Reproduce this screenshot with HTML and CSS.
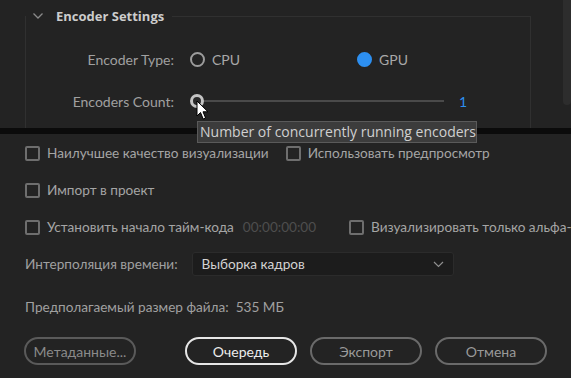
FILE: index.html
```html
<!DOCTYPE html>
<html lang="ru">
<head>
    <meta charset="UTF-8">
    <title>Export Settings</title>
    <link rel="stylesheet" href="styles.css">
</head>
<body>
    <div class="window">
        <div class="top-panel">
            <fieldset class="group">
                <legend class="group-title">
                    <svg class="chevron" width="12" height="8" viewBox="0 0 12 8"><path d="M1.5 1.5 L6 6 L10.5 1.5" fill="none" stroke="#8a8a8a" stroke-width="1.3"/></svg>
                    Encoder Settings
                </legend>
                <div class="group-grid">
                    <div class="label">Encoder Type:</div>
                    <div class="radios">
                        <div class="radio-option"><span class="radio"></span>CPU</div>
                        <div class="radio-option"><span class="radio checked"></span>GPU</div>
                    </div>
                    <div class="label">Encoders Count:</div>
                    <div class="slider">
                        <span class="thumb"></span>
                        <span class="track"></span>
                        <span class="slider-value">1</span>
                    </div>
                </div>
            </fieldset>
            <div class="scrollbar"></div>
        </div>
        <div class="divider"></div>
        <div class="bottom-panel">
            <div class="row">
                <label class="check"><span class="box"></span>Наилучшее качество визуализации</label>
                <label class="check"><span class="box"></span>Использовать предпросмотр</label>
            </div>
            <div class="row">
                <label class="check"><span class="box"></span>Импорт в проект</label>
            </div>
            <div class="row">
                <label class="check"><span class="box"></span>Установить начало тайм-кода</label>
                <span class="timecode">00:00:00:00</span>
                <label class="check alpha"><span class="box"></span>Визуализировать только альфа-канал</label>
            </div>
            <div class="row">
                <span class="muted">Интерполяция времени:</span>
                <div class="dropdown">
                    <span>Выборка кадров</span>
                    <svg width="11" height="7" viewBox="0 0 11 7"><path d="M1 1 L5.5 5.5 L10 1" fill="none" stroke="#8f8f8f" stroke-width="1.2"/></svg>
                </div>
            </div>
            <div class="row size-row">
                <span class="muted">Предполагаемый размер файла:&nbsp; 535 МБ</span>
            </div>
            <div class="buttons">
                <button class="btn meta">Метаданные...</button>
                <button class="btn primary">Очередь</button>
                <button class="btn">Экспорт</button>
                <button class="btn">Отмена</button>
            </div>
        </div>

        <div class="tooltip">Number of concurrently running encoders</div>
        <svg class="cursor" width="14" height="21" viewBox="0 0 14 21">
            <path d="M1 1 L1 16 L4.5 12.5 L7.2 19 L9.6 18 L7 11.8 L12 11.8 Z" fill="#ffffff" stroke="#000000" stroke-width="1"/>
        </svg>
    </div>
</body>
</html>
```

FILE: styles.css
```css
body {
    margin: 0;
    background: #232323;
    font-family: Lato, "Open Sans", sans-serif;
    font-size: 14px;
    color: #a5a5a5;
}
.window {
    position: relative;
    width: 571px;
    height: 378px;
    overflow: hidden;
    background: #232323;
}
.top-panel {
    display: flex;
    height: 128px;
    overflow: hidden;
}
.group {
    flex: none;
    width: 504px;
    height: 200px;
    margin: 8px 0 0 25px;
    padding: 0;
    border: 1px solid #303030;
    border-bottom: none;
}
.group-title {
    display: flex;
    align-items: center;
    gap: 12px;
    padding: 0 8px 0 6px;
    font-family: "Open Sans", sans-serif;
    font-size: 13px;
    font-weight: bold;
    color: #cccccc;
    line-height: 16px;
}
.group-grid {
    display: grid;
    grid-template-columns: 148px 1fr;
    grid-auto-rows: 24px;
    row-gap: 18px;
    align-items: center;
    margin-top: 23px;
}
.label {
    text-align: right;
    color: #a0a0a0;
}
.radios {
    display: flex;
    margin-left: 16px;
}
.radio-option {
    display: flex;
    align-items: center;
    gap: 7px;
    width: 167px;
    color: #a8a8a8;
}
.radio {
    width: 11px;
    height: 11px;
    border: 2px solid #9c9c9c;
    border-radius: 50%;
}
.radio.checked {
    border-color: #2d8ff0;
    background: #2d8ff0;
}
.slider {
    display: flex;
    align-items: center;
    margin-left: 16px;
}
.thumb {
    width: 8px;
    height: 8px;
    border: 3px solid #c4c4c4;
    border-radius: 50%;
    background: #2a2a2a;
}
.track {
    width: 240px;
    height: 2px;
    background: #4a4a4a;
}
.slider-value {
    margin-left: 15px;
    color: #2d8ff0;
}
.scrollbar {
    width: 8px;
    height: 105px;
    margin-left: auto;
    background: #2d2d2d;
    border-radius: 0 0 4px 4px;
}
.divider {
    height: 6px;
    background: #0b0b0b;
}
.bottom-panel {
    display: flex;
    flex-direction: column;
    padding: 9px 0 0 25px;
    font-size: 13.6px;
}
.row {
    display: flex;
    align-items: center;
    height: 20px;
    margin-bottom: 17px;
    white-space: nowrap;
}
.check {
    display: flex;
    align-items: center;
    gap: 7px;
}
.check + .check {
    margin-left: 17px;
}
.box {
    width: 11px;
    height: 11px;
    border: 2px solid #6e6e6e;
    border-radius: 2px;
}
.timecode {
    margin-left: 9px;
    color: #4e4e4e;
}
.alpha {
    margin-left: 33px;
}
.muted {
    color: #a0a0a0;
}
.dropdown {
    display: flex;
    align-items: center;
    justify-content: space-between;
    width: 242px;
    height: 22px;
    margin-left: 14px;
    padding: 0 9px;
    background: #1c1c1c;
    border: 1px solid #2b2b2b;
    border-radius: 3px;
    color: #d2d2d2;
}
.size-row {
    margin-top: 6px;
}
.buttons {
    display: flex;
    gap: 13px;
    margin: 3px 0 0 -1px;
}
.btn {
    width: 112px;
    height: 28px;
    border: 2px solid #6a6a6a;
    border-radius: 14px;
    background: transparent;
    font-family: inherit;
    font-size: 14px;
    color: #9a9a9a;
}
.btn.meta {
    margin-right: 36px;
    border-color: #5a5a5a;
    color: #8a8a8a;
}
.btn.primary {
    border-color: #e6e6e6;
    color: #ececec;
}
.tooltip {
    position: absolute;
    left: 197px;
    top: 121px;
    width: 278px;
    height: 20px;
    border: 1px solid #5a5a5a;
    background: #3c3c3c;
    color: #d0d0d0;
    font-family: "Open Sans", sans-serif;
    font-size: 14px;
    line-height: 20px;
    text-indent: 2px;
}
.cursor {
    position: absolute;
    left: 196px;
    top: 100px;
}
```
